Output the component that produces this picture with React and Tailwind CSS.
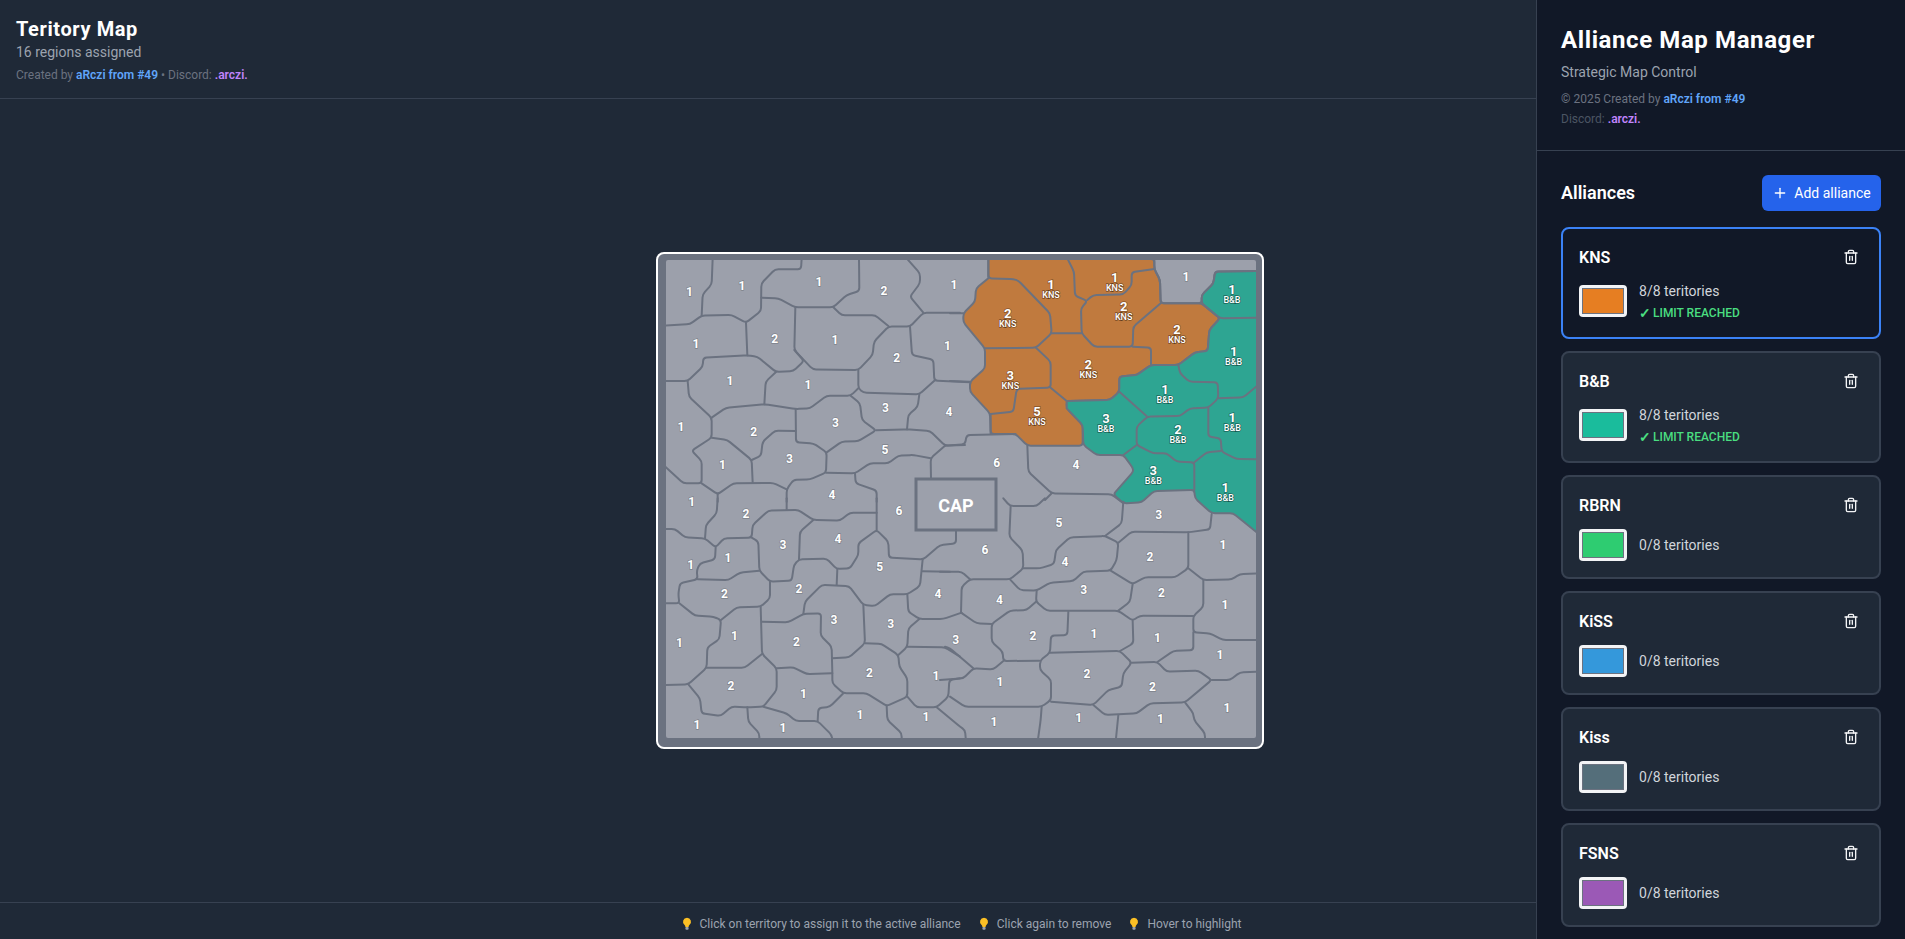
import { Plus, Trash2 } from 'lucide-react';

// map lines are traced in 3x crop units, each crop has its own page origin
const CROPS = {
  a: [650, 245],
  b: [950, 245],
  c: [650, 500],
  d: [950, 500],
};

const ORANGE = [115,42, 613,42, 613,72, 630,105, 632,175, 755,175, 810,220, 778,255, 773,318, 735,322, 685,360, 603,360, 560,390, 508,395, 508,440, 480,465, 350,468, 350,490, 398,540, 398,602, 232,602, 197,567, 122,567, 120,505, 60,440, 60,410, 105,370, 105,310, 40,232, 40,205, 75,170, 78,130, 115,100];
const TEAL = [350,468, 480,465, 508,440, 508,395, 560,390, 603,360, 685,360, 735,322, 773,318, 778,255, 810,220, 755,175, 755,150, 790,115, 795,80, 930,78, 930,870, 850,805, 785,805, 735,760, 733,735, 612,738, 575,772, 520,775, 490,748, 550,680, 548,668, 520,630, 440,630, 400,600, 398,540, 350,490];

const LINES = {
  a: [
    [188,40, 185,118, 158,148, 155,212],
    [40,242, 120,237, 155,212, 245,210, 288,233, 333,198, 334,115, 375,73, 453,73, 455,40],
    [288,233, 292,331],
    [334,158, 385,160, 436,187, 550,187, 590,150, 628,138, 627,40],
    [436,187, 433,315, 488,373, 625,375, 668,330, 672,290, 716,244, 780,245, 820,203, 930,203],
    [770,40, 810,85, 810,115, 780,155, 820,203],
    [550,187, 575,211, 676,211, 716,244],
    [780,245, 786,330, 850,344, 853,407, 960,412],
    [853,407, 808,448, 640,443, 625,430, 625,375],
    [625,430, 602,452, 530,452, 480,490, 437,492, 345,478, 228,488, 185,518],
    [40,408, 113,408, 158,365, 160,338, 292,331, 322,335, 378,381, 430,378, 462,348, 433,315],
    [378,381, 347,410, 343,478],
    [113,408, 117,455, 185,518, 185,578, 125,617, 155,648, 155,715, 100,715, 40,660],
    [185,578, 232,585, 305,645, 308,712],
    [305,645, 333,632, 338,590, 375,557, 437,558],
    [437,492, 438,592, 490,595, 530,622, 528,683, 480,703, 430,705, 410,733, 410,770],
    [602,452, 630,475, 636,525, 678,556, 625,588, 575,590, 530,622],
    [808,448, 803,485, 775,510, 771,553],
    [678,556, 770,553, 840,558, 885,602, 945,600],
    [885,602, 842,640, 843,698],
    [842,640, 790,630, 745,632, 715,655, 660,655, 615,685, 528,683],
    [615,685, 617,715, 680,737, 680,770],
    [155,715, 203,748, 250,715, 370,714, 410,733],
    [203,748, 203,770],
  ],
  b: [
    [115,42, 115,100, 190,102, 205,107, 300,205, 305,265, 258,308, 105,310],
    [350,36, 372,80, 375,152, 412,168, 393,190, 395,265, 432,305, 548,305, 550,245, 632,175],
    [305,265, 395,265],
    [412,165, 430,150, 520,148, 545,120, 545,82, 613,72],
    [548,305, 603,308, 603,360],
    [258,308, 302,350, 302,428, 200,432, 190,500, 122,507],
    [302,428, 350,468],
    [613,36, 613,72, 630,105, 632,175, 755,175, 755,150, 790,115, 795,80, 930,78],
    [755,175, 810,220, 930,218],
    [685,360, 690,385, 718,410, 803,412, 805,460, 775,488, 720,490, 690,513, 592,515, 560,545, 560,600, 610,625, 650,625, 680,650, 733,652, 733,735],
    [508,440, 592,515],
    [805,460, 880,457, 930,415],
    [775,488, 775,575, 812,580, 815,620, 860,642, 930,643],
    [812,618, 770,622, 733,652],
    [560,600, 520,630],
    [0,205, 40,205],
    [0,408, 60,410],
    [-15,602, 45,598, 50,570, 197,567],
    [122,507, 122,567],
    [232,602, 235,680, 305,745, 485,748, 520,775],
    [305,745, 285,765],
  ],
  c: [
    [203,-5, 200,40, 168,75, 165,115],
    [40,87, 75,87, 105,112, 165,115, 197,142, 222,115, 305,113, 308,75, 355,32, 445,30, 490,60, 570,62, 600,38, 680,38],
    [410,-5, 410,30],
    [680,-5, 680,90],
    [490,60, 450,95, 447,178],
    [305,113, 325,125, 328,212, 360,245, 425,242, 432,195, 447,178, 530,176, 560,207, 600,205, 625,165, 625,130, 680,90, 715,125, 717,173, 820,178, 870,135, 918,130, 918,90],
    [197,142, 195,178, 150,190, 140,212, 143,238, 90,250, 85,282, 88,310, 40,310],
    [143,238, 235,240, 270,218, 328,212],
    [88,310, 135,347, 190,350, 213,360, 208,418, 172,442, 170,503, 115,553, 40,555],
    [213,360, 260,322, 332,320, 360,295, 360,245],
    [332,320, 336,462, 380,505, 380,570, 340,620, 292,622, 245,620, 212,648, 155,640, 150,595, 115,553],
    [170,503, 285,503, 336,462],
    [292,622, 295,665, 328,700, 328,725],
    [340,620, 410,640, 437,663, 503,663, 545,705, 548,725],
    [380,505, 430,502, 470,522, 545,520],
    [336,365, 415,367, 460,342, 513,340, 512,407, 545,440, 547,520],
    [460,342, 465,305, 515,255, 597,258, 640,315, 675,318, 720,283, 772,283, 810,258, 818,178],
    [562,207, 560,255],
    [640,315, 645,430, 597,472, 547,475],
    [645,430, 695,432, 745,465, 748,500, 772,535, 772,590, 710,618, 650,580, 580,580, 547,550, 547,520],
    [580,580, 540,620, 505,625, 503,663],
    [710,618, 712,660, 755,700, 755,725],
    [772,590, 800,622, 860,622, 895,590, 898,540, 930,535],
    [818,214, 900,215],
    [772,283, 775,335, 808,357, 880,357, 935,338],
    [745,465, 772,440, 775,385, 808,357],
    [772,440, 885,442, 930,470],
  ],
  d: [
    [160,-5, 180,18, 260,18, 285,-5],
    [-30,215, 35,215, 60,238],
    [182,18, 178,110, 218,152, 220,205, 180,238, 60,238, 35,260, 33,338],
    [220,205, 270,205, 312,192, 318,150, 360,112, 465,108, 505,128, 500,180, 482,212, 400,215, 370,243, 300,248, 260,272, 210,270, 180,238],
    [520,5, 515,70, 465,108],
    [505,128, 545,95, 715,97, 780,88, 785,42],
    [715,97, 715,205, 675,232, 585,232, 548,252, 482,212],
    [715,205, 760,240, 845,238, 870,222, 930,220],
    [760,240, 760,320, 730,348, 730,397, 780,400, 818,420, 930,420],
    [730,348, 570,347, 548,362, 505,332, 290,332, 258,305, 260,272],
    [548,252, 540,305, 505,332],
    [355,335, 352,405, 303,407, 300,458, 270,482, 270,510, 303,540, 303,600, 275,620, 45,620, 0,590],
    [258,305, 230,330, 180,332, 125,372, 125,425, 158,455, 160,483, 268,482],
    [33,338, 80,370, 125,372],
    [160,483, 130,508, 70,505, 40,535, -30,540],
    [70,505, 0,445, -15,440],
    [300,458, 510,453, 545,488, 520,520, 515,560, 475,570, 430,615, 303,605],
    [510,453, 550,430, 548,362],
    [545,488, 622,486, 650,515, 745,512, 785,540, 705,607, 600,610, 560,640, 465,645, 430,615],
    [622,486, 670,453, 730,450, 730,397],
    [785,540, 840,540, 870,517, 930,515],
    [705,607, 730,640, 732,660, 765,700, 765,725],
    [505,645, 497,725],
    [275,620, 272,660, 263,725],
    [-40,622, 30,680, 45,690, 48,725],
  ],
};

const LABELS = {
  a: [[118,141,'1'],[276,123,'1'],[507,112,'1'],[702,138,'2'],[912,120,'1'],[138,297,'1'],[374,282,'2'],[555,285,'1'],[740,339,'2'],[892,303,'1'],[240,408,'1'],[474,421,'1'],[706,489,'3'],[897,500,'4'],[93,546,'1'],[311,561,'2'],[556,534,'3'],[217,660,'1'],[418,642,'3'],[705,615,'5'],[546,750,'4'],[125,772,'1']],
  b: [[708,96,'1'],[140,654,'6'],[378,660,'4']],
  c: [[288,42,'2'],[747,33,'6'],[399,135,'3'],[564,117,'4'],[234,175,'1'],[122,195,'1'],[689,201,'5'],[447,267,'2'],[223,282,'2'],[552,361,'3'],[864,283,'4'],[722,372,'3'],[88,430,'1'],[253,408,'1'],[439,426,'2'],[917,420,'3'],[658,519,'2'],[243,558,'2'],[858,528,'1'],[460,582,'1'],[630,646,'1'],[828,652,'1'],[141,676,'1'],[399,684,'1']],
  d: [[327,68,'5'],[626,45,'3'],[105,150,'6'],[819,135,'1'],[600,171,'2'],[345,186,'4'],[634,279,'2'],[401,270,'3'],[148,300,'4'],[825,315,'1'],[249,408,'2'],[432,402,'1'],[622,414,'1'],[810,465,'1'],[411,522,'2'],[607,561,'2'],[150,546,'1'],[831,624,'1'],[386,654,'1'],[631,657,'1'],[132,666,'1']],
};

const OWNED = [
  [303,117,'1','KNS'],[494,97,'1','KNS'],[173,204,'2','KNS'],[521,183,'2','KNS'],[681,252,'2','KNS'],[415,357,'2','KNS'],[181,390,'3','KNS'],[261,498,'5','KNS'],
  [846,132,'1','B&B'],[851,318,'1','B&B'],[645,432,'1','B&B'],[468,519,'3','B&B'],[684,552,'2','B&B'],[847,516,'1','B&B'],[610,675,'3','B&B'],[826,726,'1','B&B'],
];

const ALLIANCES = [
  { name: 'KNS', color: 'bg-[#e67e22]', count: 8, active: true },
  { name: 'B&B', color: 'bg-[#1abc9c]', count: 8 },
  { name: 'RBRN', color: 'bg-[#2ecc71]', count: 0 },
  { name: 'KiSS', color: 'bg-[#3498db]', count: 0 },
  { name: 'Kiss', color: 'bg-[#546e7a]', count: 0 },
  { name: 'FSNS', color: 'bg-[#9b59b6]', count: 0 },
];

// polyline with slightly rounded corners
function toPath(flat, closed = false) {
  const pts = [];
  for (let i = 0; i < flat.length; i += 2) pts.push([flat[i], flat[i + 1]]);
  const R = 10;
  const near = (p, q) => {
    const d = Math.hypot(q[0] - p[0], q[1] - p[1]) || 1;
    const r = Math.min(R, d / 2);
    return [p[0] + ((q[0] - p[0]) * r) / d, p[1] + ((q[1] - p[1]) * r) / d];
  };
  let d = `M${pts[0][0]} ${pts[0][1]}`;
  for (let i = 1; i < pts.length - 1; i++) {
    const a = near(pts[i], pts[i - 1]);
    const b = near(pts[i], pts[i + 1]);
    d += `L${a[0]} ${a[1]}Q${pts[i][0]} ${pts[i][1]} ${b[0]} ${b[1]}`;
  }
  const last = pts[pts.length - 1];
  d += `L${last[0]} ${last[1]}`;
  return closed ? d + 'Z' : d;
}

function Digit({ crop, x, y, children, size = 12, weight = '700', shadow = '#00000033' }) {
  const [ox, oy] = CROPS[crop];
  return (
    <text
      x={ox + x / 3}
      y={oy + y / 3}
      fontSize={size}
      fontWeight={weight}
      fill="#fff"
      textAnchor="middle"
      dominantBaseline="central"
      stroke={shadow}
      strokeWidth="1.5"
      paintOrder="stroke"
    >
      {children}
    </text>
  );
}

function TerritoryMap() {
  return (
    <div className="w-[608px] h-[497px] shrink-0 border-2 border-white rounded-lg bg-[#6b7280] overflow-hidden">
      <svg viewBox="658 254 604 493" className="block w-full h-full font-['Roboto',sans-serif]">
        <defs>
          <clipPath id="mapClip">
            <rect x="666" y="260" width="590" height="478" rx="2" />
          </clipPath>
        </defs>
        <g clipPath="url(#mapClip)">
          <rect x="666" y="260" width="590" height="478" fill="#9ca0ab" />
          <g transform="translate(950 245) scale(0.33333)">
            <path d={toPath(ORANGE, true)} fill="#c07a3e" stroke="#6b7280" strokeWidth="6" />
            <path d={toPath(TEAL, true)} fill="#2ea592" stroke="#6b7280" strokeWidth="6" />
          </g>
          {Object.keys(LINES).map((crop) => (
            <g
              key={crop}
              transform={`translate(${CROPS[crop][0]} ${CROPS[crop][1]}) scale(0.33333)`}
              fill="none"
              stroke="#6b7280"
              strokeWidth="6"
              strokeLinejoin="round"
              strokeLinecap="round"
            >
              {LINES[crop].map((line, i) => (
                <path key={i} d={toPath(line)} />
              ))}
            </g>
          ))}
        </g>
        <rect x="916" y="479" width="80" height="51" fill="#9ca0ab" stroke="#6b7280" strokeWidth="3" />
        <text x="956" y="505" fontSize="18" fontWeight="700" fill="#fff" textAnchor="middle" dominantBaseline="central">
          CAP
        </text>
        {Object.keys(LABELS).map((crop) =>
          LABELS[crop].map(([x, y, t], i) => (
            <Digit key={crop + i} crop={crop} x={x} y={y}>
              {t}
            </Digit>
          )),
        )}
        {OWNED.map(([x, y, n, tag], i) => (
          <g key={i}>
            <Digit crop="b" x={x} y={y} size={13} shadow="#00000055">
              {n}
            </Digit>
            <Digit crop="b" x={x} y={y + 33} size={9} weight="500" shadow="#00000066">
              {tag}
            </Digit>
          </g>
        ))}
      </svg>
    </div>
  );
}

function Bulb() {
  return (
    <svg viewBox="0 0 10 14" className="w-[10px] h-[14px] shrink-0">
      <path d="M5 .8a4 4 0 0 0-2.4 7.2c.5.5.7 1 .8 1.9h3.2c.1-.9.3-1.4.8-1.9A4 4 0 0 0 5 .8Z" fill="#fbbf24" />
      <rect x="3.4" y="10" width="3.2" height="2.8" rx="1" fill="#9ca3af" />
    </svg>
  );
}

function AllianceCard({ name, color, count, active }) {
  return (
    <div
      className={`rounded-lg border-2 p-4 shrink-0 ${
        active ? 'border-[#3b82f6] bg-[#111827]' : 'border-[#374151] bg-[#1f2937]'
      }`}
    >
      <div className="flex items-center justify-between mb-3">
        <span className="text-base leading-[23px] pt-px font-semibold text-white">{name}</span>
        <button className="p-1 text-[#f3f4f6]">
          <Trash2 size={16} />
        </button>
      </div>
      <div className="flex items-center gap-3">
        <div className="w-12 h-8 rounded bg-[#f3f4f6] p-[3px] shrink-0">
          <div className={`w-full h-full border border-[#6b7280] ${color}`} />
        </div>
        <div>
          <div className="text-sm leading-5 text-[#d1d5db]">{count}/8 teritories</div>
          {count >= 8 && (
            <div className="flex items-center h-4 mt-1 text-xs font-medium text-[#4ade80]">
              <span className="text-sm leading-none font-bold mr-0.5">✓</span> LIMIT REACHED
            </div>
          )}
        </div>
      </div>
    </div>
  );
}

export default function App() {
  return (
    <div className="flex h-[939px] overflow-hidden bg-[#1f2937] font-['Roboto',sans-serif]">
      <main className="flex-1 min-w-0 flex flex-col">
        <header className="h-[99px] shrink-0 border-b border-[#374151] px-4 pt-[15px]">
          <h1 className="text-xl leading-7 font-bold tracking-[0.6px] text-white">Teritory Map</h1>
          <p className="text-sm leading-5 -mt-px text-[#9ca3af]">16 regions assigned</p>
          <p className="text-xs leading-4 mt-[5px] text-[#6b7280]">
            Created by <span className="font-semibold text-[#60a5fa]">aRczi from #49</span> • Discord:{' '}
            <span className="font-semibold text-[#c084fc]">.arczi.</span>
          </p>
        </header>
        <div className="flex-1 flex items-center pl-[656px]">
          <TerritoryMap />
        </div>
        <footer className="h-[37px] shrink-0 border-t border-[#374151] pl-[387px] pt-1.5 flex items-center justify-center gap-[18px] text-xs text-[#9ca3af]">
          <span className="flex items-center gap-2">
            <Bulb /> Click on territory to assign it to the active alliance
          </span>
          <span className="flex items-center gap-2">
            <Bulb /> Click again to remove
          </span>
          <span className="flex items-center gap-2">
            <Bulb /> Hover to highlight
          </span>
        </footer>
      </main>
      <aside className="w-[369px] shrink-0 border-l border-[#374151] bg-[#111827] flex flex-col">
        <div className="h-[151px] shrink-0 border-b border-[#374151] px-6 pt-6">
          <h2 className="text-2xl leading-8 font-bold tracking-[0.6px] text-white">Alliance Map Manager</h2>
          <p className="text-sm leading-5 mt-1.5 text-[#9ca3af]">Strategic Map Control</p>
          <p className="text-xs leading-4 mt-[9px] text-[#6b7280]">
            © 2025 Created by <span className="font-semibold text-[#60a5fa]">aRczi from #49</span>
          </p>
          <p className="text-xs leading-4 mt-1 text-[#4b5563]">
            Discord: <span className="font-semibold text-[#c084fc]">.arczi.</span>
          </p>
        </div>
        <div className="px-6 pt-6 flex flex-col gap-3">
          <div className="flex items-center justify-between mb-1">
            <h3 className="text-lg font-semibold text-white">Alliances</h3>
            <button className="w-[119px] h-9 flex items-center justify-center gap-1.5 rounded-md bg-[#2563eb] text-sm text-white">
              <Plus size={16} /> Add alliance
            </button>
          </div>
          {ALLIANCES.map((a) => (
            <AllianceCard key={a.name} {...a} />
          ))}
        </div>
      </aside>
    </div>
  );
}
